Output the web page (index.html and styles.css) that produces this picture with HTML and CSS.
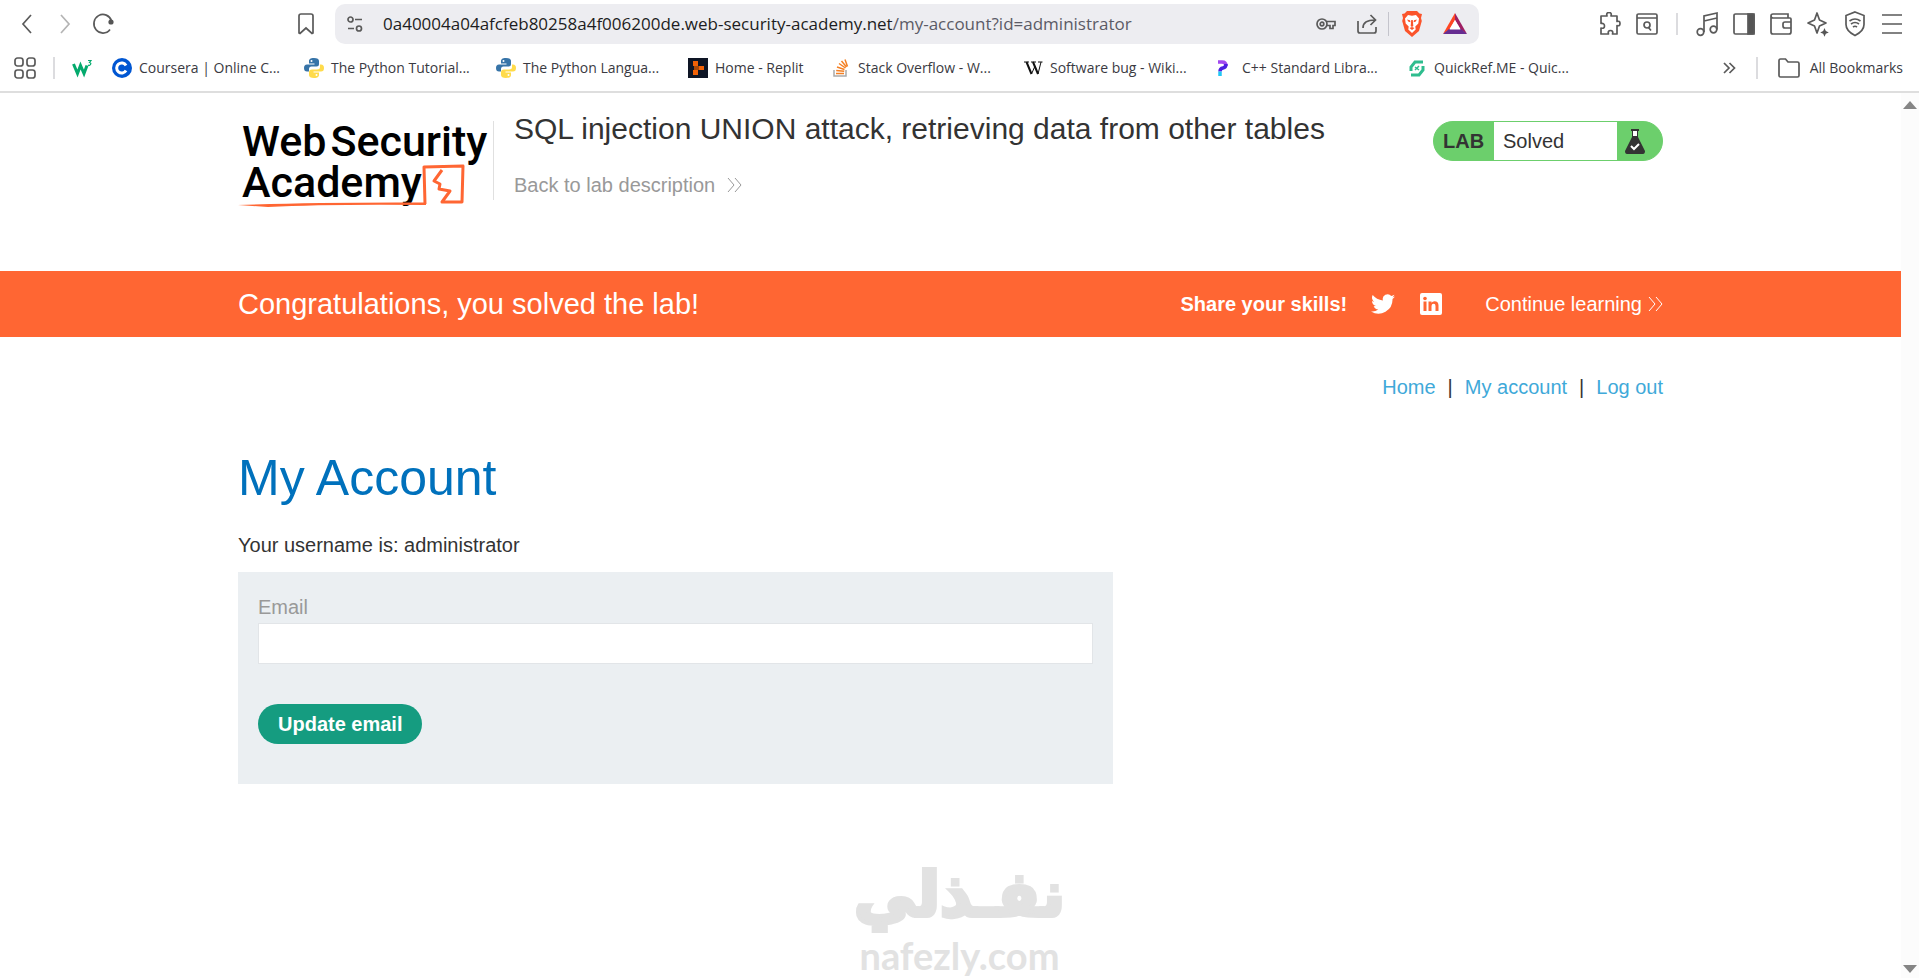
FILE: index.html
```html
<!doctype html>
<html lang="en">
    <head>
        <meta charset="UTF-8" />
        <meta name="viewport" content="width=device-width, initial-scale=1.0" />
        <title>SQL injection UNION attack, retrieving data from other tables</title>
        <link rel="stylesheet" href="styles.css">
    </head>
    <body>
        <div class="browser">
            <div class="toolbar">
                <div class="navButtons">
                    <button class="iconButton" aria-label="Back">
                        <svg width="22" height="24" viewBox="0 0 22 24"><path d="M15 3 7 12l8 9" /></svg>
                    </button>
                    <button class="iconButton faded" aria-label="Forward">
                        <svg width="22" height="24" viewBox="0 0 22 24"><path d="m7 3 8 9-8 9" /></svg>
                    </button>
                    <button class="iconButton" aria-label="Reload">
                        <svg width="22" height="24" viewBox="0 0 22 24"><path d="M18 17.5A9 9.3 0 1 1 19.5 9" /><circle cx="19" cy="10" r="2.6" fill="#555" stroke="none" /></svg>
                    </button>
                </div>
                <button class="iconButton saveButton" aria-label="Bookmark this tab">
                    <svg width="18" height="24" viewBox="0 0 18 24"><path d="M2 4q0-2 2-2h10q2 0 2 2v17l-1 .5L9 16l-6 5.500-1-.5z" /></svg>
                </button>
                <div class="addressBar">
                    <button class="iconButton" aria-label="Site information">
                        <svg width="16" height="20" viewBox="0 0 16 20"><circle cx="3.500" cy="5.500" r="2.500" /><path d="M8 5.500h7M1 14.500h6" /><circle cx="12" cy="14.500" r="2.500" /></svg>
                    </button>
                    <div class="url">0a40004a04afcfeb80258a4f006200de.web-security-academy.net<span class="path">/my-account?id=administrator</span></div>
                    <button class="iconButton" aria-label="Passwords">
                        <svg width="20" height="16" viewBox="0 0 20 16"><circle cx="6" cy="8" r="5" /><circle cx="6" cy="8" r="1.800" /><path d="M10.500 5.500h8.500v4h-2v3h-3v-3h-3.500" /></svg>
                    </button>
                    <button class="iconButton" aria-label="Share">
                        <svg width="22" height="24" viewBox="0 0 22 24"><path d="M2 9v10q0 2 2 2h14q2 0 2-2v-4M7 16q0-8 12-8M14.500 3l5 5-5 5" /></svg>
                    </button>
                    <span class="barDivider"></span>
                    <button class="iconButton" aria-label="Brave Shields">
                        <svg class="colored" width="22" height="26" viewBox="0 0 22 26"><path fill="#fb542b" d="M6 0h10l2.500 2.500 2.500.5-1 4 .8 3L18 20l-7 6-7-6L1.200 10 2 7 1 3l2.500-.5z" /><path fill="#fff" d="m7 4 4 .8 4-.8 3 3.500-.7 5-3 3 .4 3L11 22l-3.700-3.500.4-3-3-3-.7-5z" /><path fill="#fb542b" d="m6 8.500 3 .8.500 2-2-.5zM16 8.500l-3 .8-.5 2 2-.5zM10.200 9h1.600l.5 6-1.300 1-1.300-1zM8.500 17l2.500-1 2.500 1-2.500 2z" /></svg>
                    </button>
                    <button class="iconButton" aria-label="Brave Rewards">
                        <svg class="colored" width="24" height="22" viewBox="0 0 24 22"><path fill="#ff4724" d="M12 0v7L6 17l-6 4z" /><path fill="#9e1f63" d="m12 0 12 21-6-4-6-10z" /><path fill="#662d91" d="M0 21h24l-6-5H6z" /><path fill="#fff" d="m12 7 5.500 9.500h-11z" /></svg>
                    </button>
                </div>
                <div class="tools">
                    <button class="iconButton" aria-label="Extensions">
                        <svg width="22" height="24" viewBox="0 0 22 24"><path stroke-linejoin="round" d="M4 4h4q-1-3.500 2-3.500T12 4h6v5.500q3-1 3 2t-3 2V22h-4.500q1-3.500-2-3.500t-2 3.500H2v-6q3.500 1 3.500-2T2 11.500V4z" /></svg>
                    </button>
                    <button class="iconButton" aria-label="Search tabs">
                        <svg width="22" height="24" viewBox="0 0 22 24"><rect x="1" y="2" width="20" height="20" rx="1.500" /><path d="M1 6h20M12.500 15.500l2.500 3" /><circle cx="11" cy="13" r="3" /></svg>
                    </button>
                    <span class="toolDivider"></span>
                    <button class="iconButton" aria-label="Music">
                        <svg width="22" height="26" viewBox="0 0 22 26"><circle cx="4.500" cy="21" r="3.300" /><circle cx="17.500" cy="18.500" r="3.300" /><path d="M8 21V5l13-3v16.500M8 10l13-3" /></svg>
                    </button>
                    <button class="iconButton" aria-label="Sidebar">
                        <svg width="22" height="24" viewBox="0 0 22 24"><rect x="1" y="2" width="20" height="20" rx="1.500" /><path fill="#555" d="M15 2h6v20h-6z" /></svg>
                    </button>
                    <button class="iconButton" aria-label="Wallet">
                        <svg width="22" height="24" viewBox="0 0 22 24"><path d="M18 6V2H3Q1 2 1 4v16q0 2 2 2h16q2 0 2-2V7q0-1-1-1H3Q1 6 1 4" /><path d="M21 10h-6q-2 0-2 2v2q0 2 2 2h6" /></svg>
                    </button>
                    <button class="iconButton" aria-label="Leo AI">
                        <svg width="22" height="26" viewBox="0 0 22 26"><path stroke-linejoin="round" d="m10 2 2.500 7 6.500 3-6.500 3L10 22l-2.500-7L1 12l6.500-3z" /><path fill="#555" stroke="none" d="m17.500 17 1.300 3 3 1.500-3 1.300-1.300 3-1.300-3-3-1.300 3-1.500z" /></svg>
                    </button>
                    <button class="iconButton" aria-label="VPN">
                        <svg width="22" height="28" viewBox="0 0 22 28"><path d="m11 2 9 3.500v9q0 6.500-9 11-9-4.500-9-11v-9z" /><path d="M5.500 11q5.500-4 11 0M7 14q4-3 8 0M9 17q2-1.500 4 0" /></svg>
                    </button>
                    <button class="iconButton" aria-label="Menu">
                        <svg width="22" height="24" viewBox="0 0 22 24"><path d="M1 3h20M1 12h20M1 21h20" /></svg>
                    </button>
                </div>
            </div>

            <div class="bookmarks">
                <button class="iconButton" aria-label="Apps">
                    <svg width="22" height="24" viewBox="0 0 22 24"><rect x="1" y="2" width="8" height="8" rx="2.500" /><rect x="13" y="2" width="8" height="8" rx="2.500" /><rect x="1" y="14" width="8" height="8" rx="2.500" /><rect x="13" y="14" width="8" height="8" rx="2.500" /></svg>
                </button>
                <span class="toolDivider"></span>
                <a class="bookmark w3" href="#" aria-label="W3Schools">
                    <svg width="20" height="20" viewBox="0 0 20 20" stroke="#04aa6d" stroke-width="3"><path d="m1.500 6 4 9.500 3-8 3.500 8 3-8" /><path stroke-width="1.200" d="M16 2.500h3l-1.500 2q2 .5 1 2T16 7" /></svg>
                </a>
                <a class="bookmark" href="#">
                    <svg width="20" height="20" viewBox="0 0 20 20"><circle cx="10" cy="10" r="10" fill="#0056d2" /><path fill="none" stroke="#fff" stroke-width="3" d="M14 7.500a5 5 0 1 0 0 5" /></svg>
                    Coursera | Online C...
                </a>
                <a class="bookmark" href="#">
                    <svg width="20" height="20" viewBox="0 0 20 20"><use href="#python" /></svg>
                    The Python Tutorial...
                </a>
                <a class="bookmark" href="#">
                    <svg width="20" height="20" viewBox="0 0 20 20">
                        <g id="python">
                            <path fill="#3774a8" d="M10 0C6 0 5 1.500 5 3v2.500h5.500v1H3Q0 6.500 0 10t3 3.500h2V11q0-2.500 2.500-2.500h5Q15 8.500 15 6V3q0-3-5-3z" />
                            <path fill="#ffdb4b" d="M10 20c4 0 5-1.500 5-3v-2.500H9.500v-1H17q3 0 3-3.500t-3-3.500h-1V9q0 2.500-3 2.500H8Q5 11.500 5 14v3q0 3 5 3z" />
                            <circle cx="7.500" cy="3" r="1" fill="#fff" /><circle cx="12.500" cy="17" r="1" fill="#fff" />
                        </g>
                    </svg>
                    The Python Langua...
                </a>
                <a class="bookmark short" href="#">
                    <svg width="20" height="20" viewBox="0 0 20 20"><path fill="#0e1525" d="M0 0h20v20H0z" /><path fill="#f26207" d="M5 3h5v5H5zM5 12h5v5H5zM11 8h5v4h-5z" /><path fill="#a84808" d="M6 8h5v4H6z" /></svg>
                    Home - Replit
                </a>
                <a class="bookmark" href="#">
                    <svg width="20" height="20" viewBox="0 0 20 20" stroke="#f48024" stroke-width="1.500"><path stroke="#aaa" d="M3 12v6h12v-6" /><path d="M5 15.500h8M5.200 12.500l8 .8M6 9l7.500 2.500M8 5.500l6.500 4.500M10.500 3l5 6M14 1.500l2.500 7" /></svg>
                    Stack Overflow - W...
                </a>
                <a class="bookmark" href="#">
                    <svg width="20" height="20" viewBox="0 0 20 20" stroke="#111"><path stroke-width="2" d="m3.500 4 5 12M10 4l5 12" /><path stroke-width="1" d="M1 4h5M8 4h5M15 4h4.500M8.500 16 12 8M15 16l3-12" /></svg>
                    Software bug - Wiki...
                </a>
                <a class="bookmark" href="#">
                    <svg width="20" height="20" viewBox="0 0 20 20" stroke-width="3.500"><path stroke="#a349f0" d="M3 4h4q4 0 4 4" /><path stroke="#4c1fe0" d="M11 6q0 3.500-3 4t-3 3.500" /><path stroke="#21c7f5" d="M5 13.500V18" /></svg>
                    C++ Standard Libra...
                </a>
                <a class="bookmark" href="#">
                    <svg width="20" height="20" viewBox="0 0 20 20" stroke="#2ebd8e" stroke-width="3"><path d="M16 4H8L4 9v4M4 17h8l4-5V8" /><path stroke-width="1.500" d="m8 9 4 3M8 12l4-4" /></svg>
                    QuickRef.ME - Quic...
                </a>
                <div class="bookmarksEnd">
                    <button class="iconButton" aria-label="More bookmarks">
                        <svg width="14" height="16" viewBox="0 0 14 16"><path d="m2 3 5 5-5 5M7.500 3l5 5-5 5" /></svg>
                    </button>
                    <span class="toolDivider"></span>
                    <a class="allBookmarks" href="#">
                        <svg width="22" height="22" viewBox="0 0 22 22"><path d="M1 3.500Q1 2 2.500 2h5L10 5h9.500Q21 5 21 6.500v12q0 1.500-1.500 1.500h-17Q1 20 1 18.500z" /></svg>
                        All Bookmarks
                    </a>
                </div>
            </div>
        </div>

        <div class="viewport">
            <div class="page">
                <header class="labHeader container">
                    <div class="logo">
                        <div class="logoLine"><span>Web</span><span>Security</span></div>
                        <div class="logoLine">Academy</div>
                        <svg class="logoMark" width="228" height="44" viewBox="0 0 228 44" stroke="#ff6633" stroke-width="3"><path stroke-linejoin="round" d="M187 40 186 3l39-1-1 36h-20l8-11-11-2 1-5-6-3 8-11" /><path fill="#ff6633" stroke="none" d="M0 41q80-3 188-2.500V41Q90 40 30 43z" /></svg>
                    </div>
                    <div class="labTitle">
                        <h2>SQL injection UNION attack, retrieving data from other tables</h2>
                        <a class="backLink" href="#">
                            Back to lab description
                            <svg width="15" height="16" viewBox="0 0 15 16"><path d="m1 1 6 7-6 7M8 1l6 7-6 7" /></svg>
                        </a>
                    </div>
                    <div class="labStatus">
                        <span class="labTag">LAB</span>
                        <span class="labState">Solved</span>
                        <span class="labIcon">
                            <svg width="20" height="26" viewBox="0 0 20 26"><path fill="#333" d="M6 0h8v2h-1v6l7 14q0 3-2 3H2q-2 0-2-3L7 8V2H6z" /><path fill="#fff" d="M8 2h4v5H8z" /><path stroke="#fff" stroke-width="2" d="m6 17 3 3 5-5" /></svg>
                        </span>
                    </div>
                </header>

                <section class="banner">
                    <div class="container bannerRow">
                        <h4>Congratulations, you solved the lab!</h4>
                        <div class="share">
                            <strong>Share your skills!</strong>
                            <a href="#" aria-label="Twitter">
                                <svg width="24" height="24" viewBox="0 0 24 24"><path fill="#fff" d="M24 4.600c-.9.400-1.800.7-2.800.8 1-.6 1.800-1.600 2.200-2.700-1 .6-2 1-3.100 1.200a4.900 4.900 0 0 0-8.400 4.500C7.700 8.100 4.100 6.100 1.700 3.100a4.900 4.900 0 0 0 1.500 6.600c-.8 0-1.600-.2-2.200-.6 0 2.300 1.600 4.400 3.900 4.900-.7.200-1.500.2-2.200.1.600 2 2.400 3.400 4.600 3.400A9.900 9.900 0 0 1 0 19.500 14 14 0 0 0 21.500 7.100c1-.7 1.800-1.600 2.500-2.500z" /></svg>
                            </a>
                            <a href="#" aria-label="LinkedIn">
                                <svg width="24" height="24" viewBox="0 0 24 24"><rect x="1" y="1" width="22" height="22" rx="2" fill="#fff" /><path fill="#ff6633" d="M4.500 9.500h3V19h-3zM9.500 9.500h3v1.300q1-1.600 3-1.600 4 0 4 4.300V19h-3v-5q0-2.200-1.800-2.200-2.200 0-2.200 2.200v5h-3z" /><circle cx="6" cy="6.500" r="1.800" fill="#ff6633" /></svg>
                            </a>
                        </div>
                        <a class="continueLink" href="#">
                            Continue learning
                            <svg width="15" height="16" viewBox="0 0 15 16"><path d="m1 1 6 7-6 7M8 1l6 7-6 7" /></svg>
                        </a>
                    </div>
                </section>

                <main class="container">
                    <nav class="topLinks">
                        <a href="#">Home</a><span>|</span><a href="#">My account</a><span>|</span><a href="#">Log out</a>
                    </nav>
                    <h1>My Account</h1>
                    <p class="username">Your username is: administrator</p>
                    <form class="loginForm">
                        <label for="email">Email</label>
                        <input type="email" id="email" name="email" />
                        <button type="submit">Update email</button>
                    </form>
                </main>
            </div>
            <div class="scrollbar">
                <svg width="14" height="8" viewBox="0 0 14 8"><path d="m7 0 7 8H0z" /></svg>
                <svg width="14" height="8" viewBox="0 0 14 8"><path d="m7 8 7-8H0z" /></svg>
            </div>
            <div class="watermark">
                <div class="watermarkArabic" lang="ar" dir="rtl">نفـذلي</div>
                <div class="watermarkLatin">nafezly.com</div>
            </div>
        </div>
    </body>
</html>
```
FILE: styles.css
```css
* {
    box-sizing: border-box;
}
body {
    margin: 0;
    height: 100vh;
    display: flex;
    flex-direction: column;
    overflow: hidden;
    background: #fff;
    color: #333;
    font-family: "Liberation Sans", Arial, sans-serif;
    font-size: 20px;
    line-height: 24px;
}
a {
    color: inherit;
    text-decoration: none;
}
svg {
    display: block;
    flex-shrink: 0;
    fill: none;
}

/* browser bar */
.browser {
    border-bottom: 2px solid #dedede;
    font-family: "Open Sans", "Noto Sans", sans-serif;
}
.iconButton {
    padding: 0;
    border: none;
    background: none;
}
.iconButton svg,
.allBookmarks svg {
    stroke: #5a5a5a;
    stroke-width: 1.7;
}
.iconButton svg.colored {
    stroke: none;
}
.faded {
    opacity: 0.45;
}
.toolbar {
    display: flex;
    align-items: center;
    padding: 4px 16px 0;
}
.navButtons {
    display: flex;
    gap: 16px;
}
.saveButton {
    margin-left: 183px;
}
.addressBar {
    flex: 1;
    display: flex;
    align-items: center;
    height: 40px;
    margin: 0 120px 0 20px;
    padding: 0 12px;
    background: #ededf1;
    border-radius: 10px;
}
.url {
    flex: 1;
    margin-left: 20px;
    color: #1d1d22;
    font-size: 17px;
    white-space: nowrap;
}
.path {
    color: #5b5b66;
}
.addressBar .iconButton + .iconButton {
    margin-left: 20px;
}
.barDivider {
    width: 1px;
    height: 24px;
    margin: 0 12px 0 10px;
    background: #c4c4cc;
}
.tools {
    display: flex;
    align-items: center;
    gap: 15px;
}
.toolDivider {
    width: 2px;
    height: 22px;
    margin: 0 3px;
    background: #dcdcdf;
}
.bookmarks {
    display: flex;
    align-items: center;
    height: 47px;
    padding: 0 16px 0 14px;
    color: #3a3a42;
    font-size: 14px;
}
.bookmarks > .toolDivider {
    margin: 0 17px;
}
.bookmark {
    display: flex;
    align-items: center;
    gap: 7px;
    width: 192px;
    white-space: nowrap;
}
.w3 {
    width: 40px;
}
.short {
    width: 143px;
}
.bookmarksEnd {
    display: flex;
    align-items: center;
    gap: 17px;
    margin-left: auto;
}
.allBookmarks {
    display: flex;
    align-items: center;
    gap: 10px;
}

/* page */
.viewport {
    flex: 1;
    display: flex;
    position: relative;
}
.page {
    flex: 1;
}
.scrollbar {
    width: 18px;
    display: flex;
    flex-direction: column;
    align-items: center;
    justify-content: space-between;
    padding: 8px 0 5px;
    background: #fcfcfc;
}
.scrollbar svg {
    fill: #858585;
}
.container {
    width: 75%;
    max-width: 1425px;
    margin: 0 auto;
}
.labHeader {
    display: flex;
    align-items: flex-start;
    height: 178px;
    padding-top: 28px;
}
.logo {
    position: relative;
    width: 256px;
    height: 79px;
    border-right: 1px solid #e0e0e0;
    color: #000;
    font-family: Roboto, sans-serif;
    font-size: 43px;
    font-weight: 500;
    line-height: 41px;
}
.logoLine {
    display: flex;
    gap: 4px;
    padding-left: 4px;
}
.logoMark {
    position: absolute;
    left: 0;
    bottom: -8px;
}
.labTitle {
    flex: 1;
    padding-left: 20px;
}
.labTitle h2 {
    margin: -10px 0 26px;
    font-size: 30px;
    font-weight: normal;
    line-height: 36px;
}
.backLink {
    display: flex;
    align-items: center;
    gap: 12px;
    color: #999;
}
.backLink svg {
    stroke: #999;
}
.labStatus {
    display: flex;
    width: 230px;
    height: 40px;
    border: 1px solid #6ccf6c;
    border-radius: 20px;
    overflow: hidden;
    background: #6ccf6c;
    line-height: 38px;
}
.labTag {
    width: 60px;
    padding-left: 9px;
    font-weight: bold;
}
.labState {
    flex: 1;
    padding-left: 9px;
    background: #fff;
}
.labIcon {
    width: 45px;
    padding: 7px 8px;
}
.banner {
    background: #ff6633;
    color: #fff;
}
.bannerRow {
    display: flex;
    align-items: center;
    height: 66px;
}
.banner h4 {
    flex: 1;
    margin: 0;
    font-size: 29px;
    font-weight: normal;
}
.share {
    display: flex;
    align-items: center;
    gap: 24px;
    margin-right: 42px;
}
.continueLink {
    display: flex;
    align-items: center;
    gap: 6px;
}
.continueLink svg {
    stroke: #fff;
}
.topLinks {
    display: flex;
    justify-content: flex-end;
    gap: 12px;
    padding-top: 38px;
}
.topLinks a {
    color: #3fa9d9;
}
h1 {
    margin: 49px 0 25px;
    color: #0071bc;
    font-size: 50px;
    font-weight: normal;
    line-height: 60px;
}
.username {
    margin: 0;
}
.loginForm {
    width: 875px;
    max-width: 100%;
    margin-top: 15px;
    padding: 23px 20px 40px;
    background: #ebeff2;
}
.loginForm label {
    display: block;
    color: #999;
}
.loginForm input {
    display: block;
    width: 100%;
    height: 41px;
    margin: 4px 0 40px;
    padding: 0 10px;
    border: 1px solid #e2e5e8;
    background: #fff;
    font: inherit;
}
.loginForm button {
    height: 40px;
    padding: 0 20px;
    border: none;
    border-radius: 20px;
    background: #159c80;
    color: #fff;
    font: inherit;
    font-weight: bold;
}

/* watermark laid over the page */
.watermark {
    position: absolute;
    left: 50%;
    bottom: 0;
    transform: translateX(-50%);
    color: #e2e2e2;
    text-align: center;
    font-weight: bold;
}
.watermarkArabic {
    font-family: "DejaVu Sans", sans-serif;
    font-size: 62px;
    line-height: 74px;
    -webkit-text-stroke: 4px #e2e2e2;
}
.watermarkLatin {
    font-family: Lato, sans-serif;
    font-size: 38px;
    line-height: 46px;
}
```
